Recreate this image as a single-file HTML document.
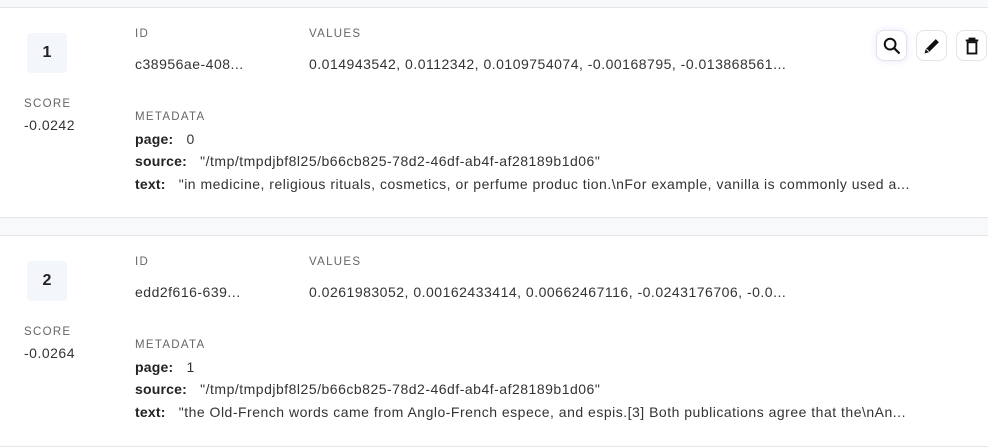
<!DOCTYPE html>
<html><head><style>
*{margin:0;padding:0;box-sizing:border-box}
body{width:988px;height:445px;background:#f8f9fa;font-family:"Liberation Sans",sans-serif;color:#222;position:relative;overflow:hidden}
.card{position:absolute;left:0;width:988px;background:#fff;border-top:1px solid #e6e6ea;border-bottom:1px solid #e6e6ea}
.a{position:absolute;white-space:nowrap}
.badge{left:27px;width:40px;height:40px;background:#f3f6fb;border-radius:4px;text-align:center;line-height:40px;font-weight:bold;font-size:16px}
.lbl{font-size:11.5px;letter-spacing:1.3px;color:#666}
.v{font-size:14px;color:#333;letter-spacing:0.5px}
.k{font-weight:bold;font-size:14px;color:#222;letter-spacing:0.2px}
.btn{width:31px;height:31px;border:1px solid #e3e3e8;border-radius:8px;background:#fff;display:flex;align-items:center;justify-content:center}
</style></head><body>
<div class="card" style="top:7px;height:211px">
<div class="a badge" style="top:25px">1</div>
<div class="a lbl" style="left:135px;top:20px">ID</div>
<div class="a v" style="left:135px;top:48px">c38956ae-408...</div>
<div class="a lbl" style="left:309px;top:20px">VALUES</div>
<div class="a v" style="left:309px;top:48px">0.014943542, 0.0112342, 0.0109754074, -0.00168795, -0.013868561...</div>
<div class="a lbl" style="left:24px;top:90px">SCORE</div>
<div class="a v" style="left:24px;top:109px">-0.0242</div>
<div class="a lbl" style="left:135px;top:103px">METADATA</div>
<div class="a v" style="left:135px;top:123px"><span class="k">page:</span>&nbsp;&nbsp; 0</div>
<div class="a v" style="left:135px;top:145px"><span class="k">source:</span>&nbsp;&nbsp; "/tmp/tmpdjbf8l25/b66cb825-78d2-46df-ab4f-af28189b1d06"</div>
<div class="a v" style="left:135px;top:168px"><span class="k">text:</span>&nbsp;&nbsp; "in medicine, religious rituals, cosmetics, or perfume produc tion.\nFor example, vanilla is commonly used a...</div>
<div class="a btn" style="left:876px;top:22px;box-shadow:0 0 8px #e6e8ff"><svg width="20" height="20" viewBox="0 0 16 16"><circle cx="6.5" cy="6.5" r="4.3" fill="none" stroke="#111" stroke-width="1.6"/><path d="M9.7 9.7L14 14" stroke="#111" stroke-width="1.8"/></svg></div>
<div class="a btn" style="left:916px;top:22px"><svg width="20" height="20" viewBox="0 0 16 16"><path d="M2 14l1-3.5 8-8 2.5 2.5-8 8z" fill="#111"/><path d="M3.5 10.5l2 2" stroke="#fff" stroke-width="0.8"/></svg></div>
<div class="a btn" style="left:956px;top:22px"><svg width="20" height="20" viewBox="0 0 16 16"><path d="M3 3.5h10M6 3.5V2h4v1.5" stroke="#111" stroke-width="1.5" fill="none"/><rect x="4.5" y="5" width="7" height="9" fill="none" stroke="#111" stroke-width="1.5"/></svg></div>
</div>
<div class="card" style="top:235px;height:212px">
<div class="a badge" style="top:25px">2</div>
<div class="a lbl" style="left:135px;top:20px">ID</div>
<div class="a v" style="left:135px;top:48px">edd2f616-639...</div>
<div class="a lbl" style="left:309px;top:20px">VALUES</div>
<div class="a v" style="left:309px;top:48px">0.0261983052, 0.00162433414, 0.00662467116, -0.0243176706, -0.0...</div>
<div class="a lbl" style="left:24px;top:90px">SCORE</div>
<div class="a v" style="left:24px;top:109px">-0.0264</div>
<div class="a lbl" style="left:135px;top:103px">METADATA</div>
<div class="a v" style="left:135px;top:123px"><span class="k">page:</span>&nbsp;&nbsp; 1</div>
<div class="a v" style="left:135px;top:145px"><span class="k">source:</span>&nbsp;&nbsp; "/tmp/tmpdjbf8l25/b66cb825-78d2-46df-ab4f-af28189b1d06"</div>
<div class="a v" style="left:135px;top:168px"><span class="k">text:</span>&nbsp;&nbsp; "the Old-French words came from Anglo-French espece, and espis.[3] Both publications agree that the\nAn...</div>
</div>
</body></html>
